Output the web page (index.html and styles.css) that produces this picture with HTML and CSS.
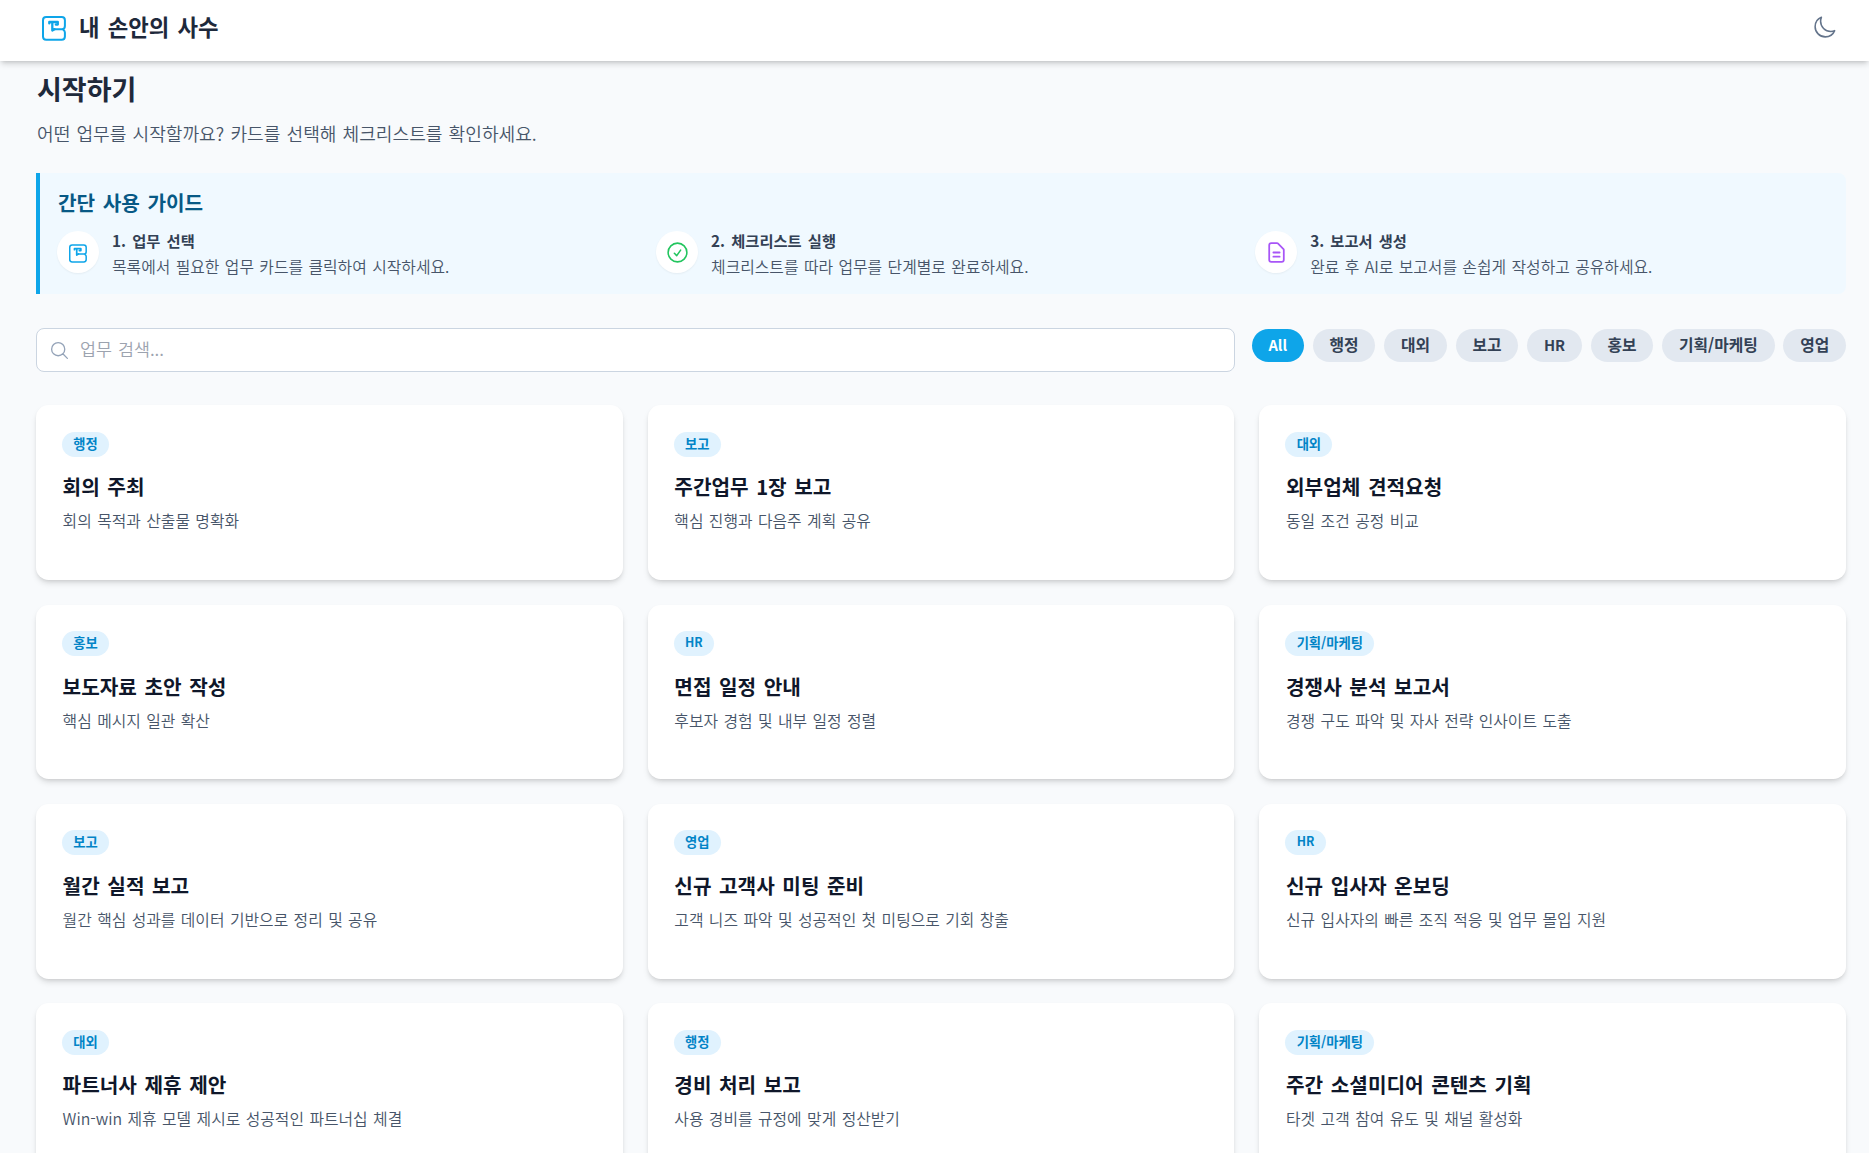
FILE: index.html
```
<!DOCTYPE html>
<html lang="ko">
<head>
  <meta charset="utf-8">
  <title>내 손안의 사수</title>
  <link rel="stylesheet" href="styles.css">
</head>
<body>

  <header class="header">
    <div class="brand">
      <svg class="brand-icon" viewBox="0 0 24 25" fill="none" stroke="currentColor" stroke-width="2" stroke-linecap="round" stroke-linejoin="round">
        <path d="M12.5 13.2H20Q22.9 13.2 22.9 10V4.2Q22.9 1 19.7 1H4.2Q1 1 1 4.2V20.6Q1 23.8 4.2 23.8H19.7Q22.9 23.8 22.9 20.6V16.6Q22.9 14.6 21.3 13.8"/>
        <path stroke-width="2.3" d="M7.3 7.4V6H15.8V8.6H13.8M10.3 6V14.6L12.5 13.2"/>
      </svg>
      <span class="brand-name">내 손안의 사수</span>
    </div>
    <svg class="moon" viewBox="0 0 24 24" fill="none" stroke="currentColor" stroke-width="1.5" stroke-linecap="round" stroke-linejoin="round">
      <path d="M21.752 15.002A9.718 9.718 0 0 1 18 15.75c-5.385 0-9.75-4.365-9.75-9.75 0-1.33.266-2.597.748-3.752A9.753 9.753 0 0 0 3 11.25C3 16.635 7.365 21 12.75 21a9.753 9.753 0 0 0 9.002-5.998Z"/>
    </svg>
  </header>

  <main class="main">
    <h1>시작하기</h1>
    <p class="subtitle">어떤 업무를 시작할까요? 카드를 선택해 체크리스트를 확인하세요.</p>

    <section class="guide">
      <h2>간단 사용 가이드</h2>
      <div class="steps">
        <div class="step">
          <div class="step-icon blue">
            <svg class="small-icon" viewBox="0 0 24 25" fill="none" stroke="currentColor" stroke-width="2" stroke-linecap="round" stroke-linejoin="round">
              <path d="M12.5 13.2H20Q22.9 13.2 22.9 10V4.2Q22.9 1 19.7 1H4.2Q1 1 1 4.2V20.6Q1 23.8 4.2 23.8H19.7Q22.9 23.8 22.9 20.6V16.6Q22.9 14.6 21.3 13.8"/>
              <path stroke-width="2.3" d="M7.3 7.4V6H15.8V8.6H13.8M10.3 6V14.6L12.5 13.2"/>
            </svg>
          </div>
          <div>
            <h3>1. 업무 선택</h3>
            <p>목록에서 필요한 업무 카드를 클릭하여 시작하세요.</p>
          </div>
        </div>
        <div class="step">
          <div class="step-icon green">
            <svg viewBox="0 0 24 24" fill="none" stroke="currentColor" stroke-width="1.5" stroke-linecap="round" stroke-linejoin="round">
              <path d="M9 12.75 11.25 15 15 9.75M21 12a9 9 0 1 1-18 0 9 9 0 0 1 18 0Z"/>
            </svg>
          </div>
          <div>
            <h3>2. 체크리스트 실행</h3>
            <p>체크리스트를 따라 업무를 단계별로 완료하세요.</p>
          </div>
        </div>
        <div class="step">
          <div class="step-icon purple">
            <svg viewBox="0 0 24 24" fill="none" stroke="currentColor" stroke-width="1.7" stroke-linecap="round" stroke-linejoin="round">
              <path d="M9 12h6m-6 4h6m2 5H7a2 2 0 0 1-2-2V5a2 2 0 0 1 2-2h5.586a1 1 0 0 1 .707.293l5.414 5.414a1 1 0 0 1 .293.707V19a2 2 0 0 1-2 2Z"/>
            </svg>
          </div>
          <div>
            <h3>3. 보고서 생성</h3>
            <p>완료 후 AI로 보고서를 손쉽게 작성하고 공유하세요.</p>
          </div>
        </div>
      </div>
    </section>

    <div class="toolbar">
      <label class="search">
        <svg viewBox="0 0 24 24" fill="none" stroke="currentColor" stroke-width="1.5" stroke-linecap="round" stroke-linejoin="round">
          <path d="m21 21-5.197-5.197m0 0A7.5 7.5 0 1 0 5.196 5.196a7.5 7.5 0 0 0 10.607 10.607Z"/>
        </svg>
        <input type="text" placeholder="업무 검색...">
      </label>
      <div class="filters">
        <button class="filter latin active">All</button>
        <button class="filter">행정</button>
        <button class="filter">대외</button>
        <button class="filter">보고</button>
        <button class="filter latin">HR</button>
        <button class="filter">홍보</button>
        <button class="filter">기획/마케팅</button>
        <button class="filter">영업</button>
      </div>
    </div>

    <div class="cards">
      <div class="card">
        <span class="tag">행정</span>
        <h3>회의 주최</h3>
        <p>회의 목적과 산출물 명확화</p>
      </div>
      <div class="card">
        <span class="tag">보고</span>
        <h3>주간업무 1장 보고</h3>
        <p>핵심 진행과 다음주 계획 공유</p>
      </div>
      <div class="card">
        <span class="tag">대외</span>
        <h3>외부업체 견적요청</h3>
        <p>동일 조건 공정 비교</p>
      </div>
      <div class="card">
        <span class="tag">홍보</span>
        <h3>보도자료 초안 작성</h3>
        <p>핵심 메시지 일관 확산</p>
      </div>
      <div class="card">
        <span class="tag latin">HR</span>
        <h3>면접 일정 안내</h3>
        <p>후보자 경험 및 내부 일정 정렬</p>
      </div>
      <div class="card">
        <span class="tag">기획/마케팅</span>
        <h3>경쟁사 분석 보고서</h3>
        <p>경쟁 구도 파악 및 자사 전략 인사이트 도출</p>
      </div>
      <div class="card">
        <span class="tag">보고</span>
        <h3>월간 실적 보고</h3>
        <p>월간 핵심 성과를 데이터 기반으로 정리 및 공유</p>
      </div>
      <div class="card">
        <span class="tag">영업</span>
        <h3>신규 고객사 미팅 준비</h3>
        <p>고객 니즈 파악 및 성공적인 첫 미팅으로 기회 창출</p>
      </div>
      <div class="card">
        <span class="tag latin">HR</span>
        <h3>신규 입사자 온보딩</h3>
        <p>신규 입사자의 빠른 조직 적응 및 업무 몰입 지원</p>
      </div>
      <div class="card">
        <span class="tag">대외</span>
        <h3>파트너사 제휴 제안</h3>
        <p>Win-win 제휴 모델 제시로 성공적인 파트너십 체결</p>
      </div>
      <div class="card">
        <span class="tag">행정</span>
        <h3>경비 처리 보고</h3>
        <p>사용 경비를 규정에 맞게 정산받기</p>
      </div>
      <div class="card">
        <span class="tag">기획/마케팅</span>
        <h3>주간 소셜미디어 콘텐츠 기획</h3>
        <p>타겟 고객 참여 유도 및 채널 활성화</p>
      </div>
    </div>
  </main>

</body>
</html>
```
FILE: styles.css
```
* {
  box-sizing: border-box;
}

body {
  margin: 0;
  height: 1153px;
  overflow: hidden;
  background: #f8fafc;
  color: #1e293b;
  font-family: "Noto Sans CJK KR", sans-serif;
  font-size: 16px;
  word-spacing: 0.12em;
}

h1, h2, h3, p {
  margin: 0;
}

p {
  font-weight: 350;
  word-spacing: 0.06em;
}

svg {
  display: block;
  flex: none;
}

.header {
  position: relative;
  display: flex;
  justify-content: space-between;
  height: 61px;
  padding: 14px 32px 0 42px;
  background: #fff;
  box-shadow: 0 4px 6px -1px rgba(0, 0, 0, 0.15), 0 2px 4px -2px rgba(0, 0, 0, 0.15);
}

.brand {
  display: flex;
  align-items: center;
  height: 28px;
  gap: 13px;
}

.brand-icon {
  width: 24px;
  height: 25px;
  color: #0ea5e9;
}

.brand-name {
  margin-top: -4px;
  font-size: 22.3px;
  font-weight: 600;
}

.moon {
  width: 25px;
  height: 25px;
  margin-top: 1px;
  color: #64748b;
}

.main {
  padding: 10px 23px 0 36px;
}

h1 {
  padding-left: 1px;
  font-size: 27px;
  line-height: 36px;
  font-weight: 700;
}

.subtitle {
  margin-top: 13px;
  padding-left: 1px;
  font-size: 18.1px;
  line-height: 27px;
  color: #475569;
}

.guide {
  height: 121px;
  margin-top: 26px;
  padding: 16px 17px;
  background: #f0f9ff;
  border-left: 4px solid #0ea5e9;
  border-radius: 0 8px 8px 0;
}

h2 {
  padding-left: 1px;
  font-size: 20.2px;
  line-height: 27px;
  font-weight: 600;
  color: #075985;
}

.steps {
  display: grid;
  grid-template-columns: repeat(3, 1fr);
  gap: 25.2px;
  margin-top: 12px;
}

.step {
  display: flex;
  gap: 13px;
}

.step h3 {
  margin-top: -1px;
  font-size: 15.3px;
  line-height: 26px;
  font-weight: 600;
  color: #334155;
}

.step p {
  margin-top: 1px;
  font-size: 15.85px;
  line-height: 26px;
  color: #475569;
}

.step-icon {
  display: flex;
  align-items: center;
  justify-content: center;
  width: 42px;
  height: 42px;
  margin-top: 3px;
  background: #fff;
  border-radius: 50%;
  box-shadow: 0 1px 2px rgba(0, 0, 0, 0.05);
}

.step-icon svg {
  width: 25px;
  height: 25px;
}

.step-icon .small-icon {
  width: 18px;
  height: 19px;
  margin-top: 2px;
}

.blue {
  color: #0ea5e9;
}

.green {
  color: #22c55e;
}

.purple {
  color: #a855f7;
}

.toolbar {
  display: flex;
  align-items: flex-start;
  gap: 17px;
  margin-top: 34px;
}

.search {
  display: flex;
  align-items: center;
  flex: 1;
  height: 44px;
  padding: 0 12px;
  background: #fff;
  border: 1px solid #cbd5e1;
  border-radius: 8px;
}

.search svg {
  width: 21px;
  height: 21px;
  color: #94a3b8;
}

.search input {
  flex: 1;
  margin: -3px 0 0 10px;
  padding: 0;
  border: none;
  outline: none;
  background: none;
  font-family: inherit;
  font-size: 17.4px;
  font-weight: 350;
  word-spacing: 0.06em;
}

.search input::placeholder {
  color: #9ca3af;
}

.filters {
  display: flex;
  gap: 8.8px;
  padding-top: 1px;
}

.filter {
  height: 33px;
  padding: 0 16.8px 2px;
  border: none;
  border-radius: 17px;
  background: #e2e8f0;
  color: #334155;
  font-family: inherit;
  font-size: 15.8px;
  font-weight: 600;
}

.filter.latin {
  font-size: 14.7px;
}

.filter.active {
  background: #0ea5e9;
  color: #fff;
}

.cards {
  display: grid;
  grid-template-columns: repeat(3, 1fr);
  gap: 24.7px 25.2px;
  margin-top: 33.4px;
}

.card {
  height: 174.6px;
  padding: 26.4px 26px;
  background: #fff;
  border-radius: 12.6px;
  box-shadow: 0 4px 6px -1px rgba(0, 0, 0, 0.13), 0 2px 4px -2px rgba(0, 0, 0, 0.13);
}

.tag {
  display: block;
  width: fit-content;
  height: 25px;
  padding: 0 11.2px;
  border-radius: 13px;
  background: #e0f2fe;
  color: #0284c7;
  font-size: 13.3px;
  line-height: 23px;
  font-weight: 600;
}

.tag.latin {
  font-size: 12.3px;
}

.card h3 {
  margin-top: 16.6px;
  padding-left: 0.6px;
  font-size: 20.2px;
  line-height: 28px;
  font-weight: 600;
  color: #0f172a;
}

.card p {
  margin-top: 8px;
  padding-left: 0.6px;
  font-size: 15.85px;
  line-height: 23px;
  color: #475569;
}
```
